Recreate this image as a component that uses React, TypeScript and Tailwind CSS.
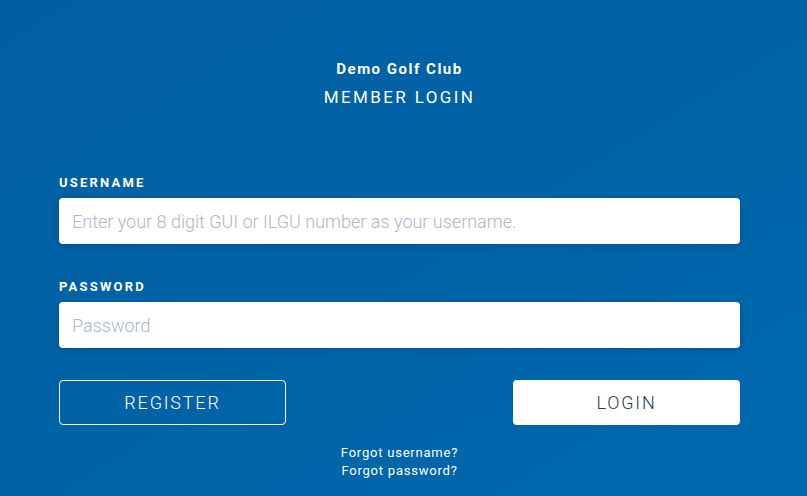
const App = () => {
  return (
    <div
      className="min-h-[496px] w-full bg-gradient-to-br from-[#005fa1] via-[#0063a7] to-[#0069ae] font-['Roboto',sans-serif] text-white"
    >
      <div className="ml-[59px] flex w-[681px] flex-col pt-[58px]">
        <div className="flex flex-col items-center">
          <h1 className="text-[15px] leading-[22px] font-bold tracking-[0.1em]">Demo Golf Club</h1>
          <h2 className="mt-[6px] text-[17px] leading-[22px] tracking-[0.14em]">MEMBER LOGIN</h2>
        </div>

        <form className="mt-[67px] flex flex-col" onSubmit={(e) => e.preventDefault()}>
          <label className="text-[13px] leading-[16px] font-bold tracking-[0.17em]">USERNAME</label>
          <input
            type="text"
            placeholder="Enter your 8 digit GUI or ILGU number as your username."
            className="mt-[7px] h-[46px] w-full rounded-[4px] bg-white px-[13px] text-[18px] font-light text-gray-800 shadow-[0_2px_6px_rgba(0,30,70,0.25)] outline-none placeholder:text-[#a9b8cb]"
          />

          <label className="mt-[35px] text-[13px] leading-[16px] font-bold tracking-[0.17em]">PASSWORD</label>
          <input
            type="password"
            placeholder="Password"
            className="mt-[7px] h-[46px] w-full rounded-[4px] bg-white px-[13px] text-[18px] font-light text-gray-800 shadow-[0_2px_6px_rgba(0,30,70,0.25)] outline-none placeholder:text-[#a9b8cb]"
          />

          <div className="mt-[32px] flex justify-between">
            <button
              type="button"
              className="h-[45px] w-[227px] rounded-[4px] border border-white text-[18px] font-light tracking-[0.1em]"
            >
              REGISTER
            </button>
            <button
              type="submit"
              className="h-[45px] w-[227px] rounded-[4px] bg-white text-[18px] font-light tracking-[0.1em] text-[#2b3a55]"
            >
              LOGIN
            </button>
          </div>

          <div className="mt-[19px] flex flex-col items-center text-[13px] leading-[18px] tracking-[0.06em]">
            <a href="#">Forgot username?</a>
            <a href="#">Forgot password?</a>
          </div>
        </form>
      </div>
    </div>
  )
}

export default App
